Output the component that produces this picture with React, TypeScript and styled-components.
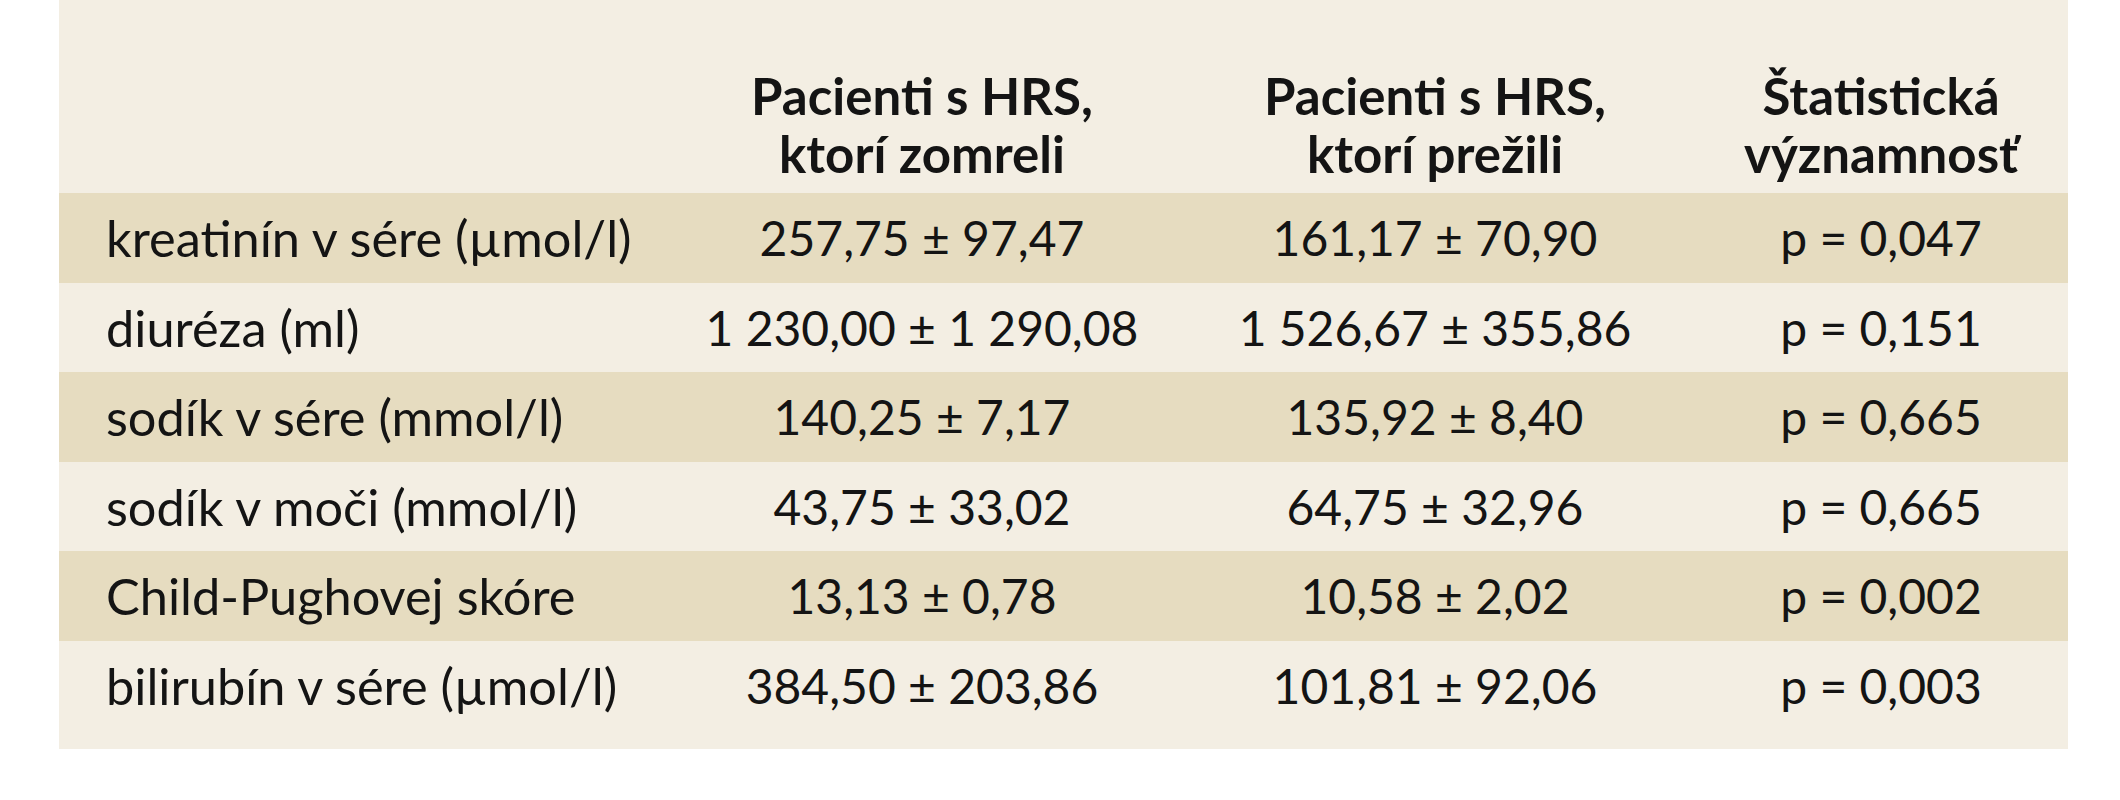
import styled, { createGlobalStyle } from 'styled-components';

const GlobalStyle = createGlobalStyle`
  html, body {
    margin: 0;
    padding: 0;
    background: #ffffff;
  }
`;

const Page = styled.div`
  width: 2120px;
  height: 800px;
  padding-left: 59px;
  box-sizing: border-box;
`;

const Table = styled.table`
  width: 2009px;
  border-collapse: collapse;
  table-layout: fixed;
  font-family: Lato, "Open Sans", sans-serif;
  font-size: 48px;
  color: #141414;
`;

const HeadRow = styled.tr`
  background: #f3eee3;
`;

const HeadCell = styled.th`
  font-size: 51px;
  font-weight: 700;
  line-height: 58px;
  text-align: center;
  vertical-align: bottom;
  padding: 67px 0 10px;
`;

const BodyRow = styled.tr<{ $shaded: boolean }>`
  background: ${({ $shaded }) => ($shaded ? '#e6dcc0' : '#f3eee3')};
`;

const Cell = styled.td<{ $label?: boolean; $last?: boolean }>`
  font-size: ${({ $label }) => ($label ? '50.5px' : '48px')};
  font-weight: 400;
  line-height: 58px;
  white-space: nowrap;
  text-align: ${({ $label }) => ($label ? 'left' : 'center')};
  padding: 16px 0 ${({ $last }) => ($last ? '34px' : '15.5px')};
  padding-left: ${({ $label }) => ($label ? '47px' : '0')};
`;

const rows = [
  ['kreatinín v sére (µmol/l)', '257,75 ± 97,47', '161,17 ± 70,90', 'p = 0,047'],
  ['diuréza (ml)', '1 230,00 ± 1 290,08', '1 526,67 ± 355,86', 'p = 0,151'],
  ['sodík v sére (mmol/l)', '140,25 ± 7,17', '135,92 ± 8,40', 'p = 0,665'],
  ['sodík v moči (mmol/l)', '43,75 ± 33,02', '64,75 ± 32,96', 'p = 0,665'],
  ['Child-Pughovej skóre', '13,13 ± 0,78', '10,58 ± 2,02', 'p = 0,002'],
  ['bilirubín v sére (µmol/l)', '384,50 ± 203,86', '101,81 ± 92,06', 'p = 0,003'],
];

export default function App() {
  return (
    <>
      <GlobalStyle />
      <Page>
        <Table>
          <colgroup>
            <col style={{ width: 609 }} />
            <col style={{ width: 508 }} />
            <col style={{ width: 518 }} />
            <col style={{ width: 374 }} />
          </colgroup>
          <thead>
            <HeadRow>
              <HeadCell />
              <HeadCell>
                Pacienti s HRS,
                <br />
                ktorí zomreli
              </HeadCell>
              <HeadCell>
                Pacienti s HRS,
                <br />
                ktorí prežili
              </HeadCell>
              <HeadCell>
                Štatistická
                <br />
                významnosť
              </HeadCell>
            </HeadRow>
          </thead>
          <tbody>
            {rows.map((row, i) => (
              <BodyRow key={row[0]} $shaded={i % 2 === 0}>
                {row.map((value, j) => (
                  <Cell key={j} $label={j === 0} $last={i === rows.length - 1}>
                    {value}
                  </Cell>
                ))}
              </BodyRow>
            ))}
          </tbody>
        </Table>
      </Page>
    </>
  );
}
